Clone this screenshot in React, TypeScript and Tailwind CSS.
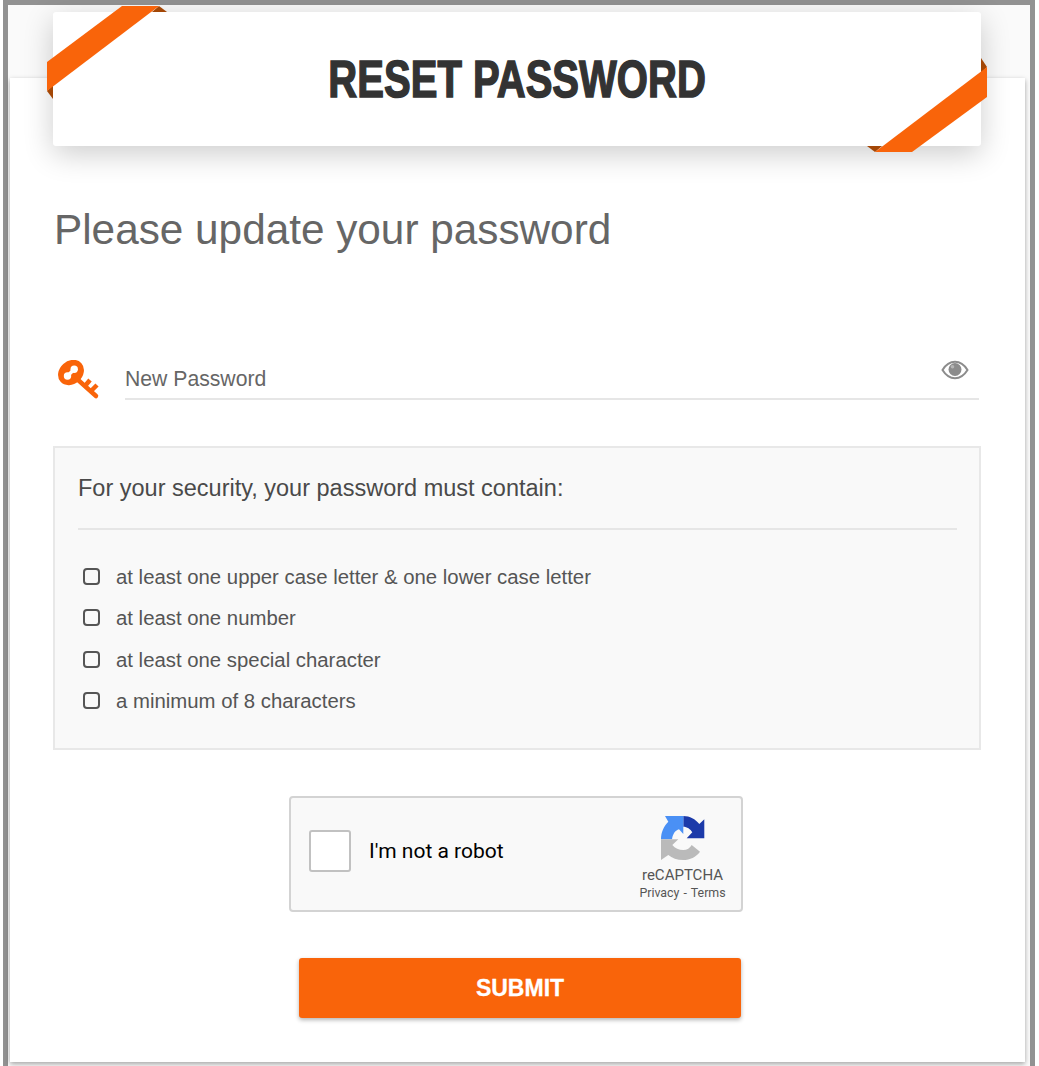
import React from "react";

const rules = [
  "at least one upper case letter & one lower case letter",
  "at least one number",
  "at least one special character",
  "a minimum of 8 characters",
];

const KeyIcon = () => (
  <svg width="44" height="42" viewBox="0 0 44 42" fill="none" className="block">
    {/* shaft + teeth */}
    <path
      stroke="#f9640a"
      strokeWidth="4.500"
      strokeLinecap="round"
      d="M19 19 38 36"
    />
    <path stroke="#f9640a" strokeWidth="4.500" d="M27 26 32 20M33 31 39 25" />
    {/* head */}
    <ellipse cx="13" cy="12.500" rx="14" ry="11.500" fill="#f9640a" transform="rotate(-42 13 12.500)" />
    <circle cx="9.500" cy="16" r="3.700" fill="#fff" />
    <circle cx="16.200" cy="9.300" r="3.700" fill="#fff" />
    <path stroke="#fff" strokeWidth="3.500" d="M9.500 16 16.200 9.300" />
  </svg>
);

const EyeIcon = () => (
  <svg width="28" height="20" viewBox="0 0 28 20" className="block">
    <path
      d="M1.500 10C5 4.300 9 1.800 14 1.800S23 4.300 26.500 10C23 15.700 19 18.200 14 18.200S5 15.700 1.500 10Z"
      fill="none"
      stroke="#8c8c8c"
      strokeWidth="2"
    />
    <circle cx="14" cy="9.500" r="6.500" fill="#8c8c8c" />
    <circle cx="11.500" cy="6.800" r="1.800" fill="#b5b5b5" />
  </svg>
);

const RecaptchaLogo = () => (
  <svg width="46" height="46" viewBox="0 0 46 46" className="block">
    <path
      fill="#1c3aa9"
      d="M23.300 0C30 0 35.300 3 39.300 8L44.300 3.300V22.300H26.700L32.300 16.300C30.500 13 27 10.700 23.300 10.700Z"
    />
    <path
      fill="#4a90f5"
      d="M1 23.300C1 16 4 10 8.300 5.700L5 0H23.300V18L19 13.300C15.500 14.500 13 17 12 23.300Z"
    />
    <path
      fill="#bababa"
      d="M1 23.300H18.300L12.300 29C15 32.500 19 34 23.300 34 27 34 30 32 31.700 29L40 35.700C36 41 30 44 23.300 44 17 44 12 42 8.300 39L1 44Z"
    />
  </svg>
);

export default function App() {
  return (
    <div className="h-[1066px] w-[1039px] overflow-hidden bg-white pl-[3px] font-['Liberation_Sans',Arial,sans-serif]">
      <div className="h-[1080px] w-[1032px] border-x-[5px] border-t-[5px] border-[#929292] bg-[#fafafa] pt-[73px] pl-[2px]">
        <div className="flex h-[984px] w-[1015px] flex-col bg-white pl-[43px] shadow-[0_2px_5px_rgba(0,0,0,0.35)]">
          {/* header card with ribbons */}
          <div className="relative -mt-[66px] flex h-[134px] w-[928px] shrink-0 items-center justify-center rounded-[3px] bg-white shadow-[0_8px_30px_rgba(0,0,0,0.2)]">
            <h1 className="scale-x-[0.77] whitespace-nowrap text-[52px] leading-none font-bold text-[#333] [-webkit-text-stroke:1.5px_#333]">
              RESET PASSWORD
            </h1>
            <svg
              width="940"
              height="146"
              viewBox="0 0 940 146"
              className="pointer-events-none absolute -top-[6px] -left-[6px]"
            >
              <path fill="#a34706" d="M105 6 112 0 120 6Z" />
              <path fill="#a34706" d="M0 85 6 79V93Z" />
              <path fill="#f9640a" d="M0 56 75 0H112L0 85Z" />
              <path fill="#a34706" d="M934 52 940 61 934 67Z" />
              <path fill="#a34706" d="M820 140H835L828 146Z" />
              <path fill="#f9640a" d="M940 61V91L865 146H828Z" />
            </svg>
          </div>

          <h2 className="mt-[60px] h-[48px] whitespace-nowrap pl-px text-[42.300px] leading-[48px] text-[#666]">
            Please update your password
          </h2>

          {/* password field */}
          <div className="mt-[106px] flex h-[40px] w-[926px] items-start">
            <div className="w-[72px] shrink-0 pl-[5px]">
              <KeyIcon />
            </div>
            <div className="flex h-[40px] flex-1 items-start justify-between border-b-2 border-[#e6e6e6]">
              <span className="pt-[7px] text-[21.200px] leading-[23px] text-[#666]">New Password</span>
              <span className="mr-[10px]">
                <EyeIcon />
              </span>
            </div>
          </div>

          {/* password rules */}
          <div className="mt-[46px] h-[304px] w-[928px] border-2 border-[#e8e8e8] bg-[#f9f9f9] px-[23px]">
            <p className="mt-[27px] h-[26px] whitespace-nowrap text-[23.500px] leading-[26px] text-[#4a4a4a]">
              For your security, your password must contain:
            </p>
            <div className="mt-[27px] h-[2px] w-[879px] bg-[#e6e6e6]" />
            <ul className="mt-[31px] flex flex-col">
              {rules.map((rule) => (
                <li key={rule} className="flex h-[41.300px] items-start gap-[16px] pl-[5px]">
                  <span className="mt-[7px] h-[17px] w-[17px] shrink-0 rounded-[4px] border-2 border-[#555]" />
                  <span className="text-[20.350px] leading-[32px] text-[#555]">{rule}</span>
                </li>
              ))}
            </ul>
          </div>

          {/* captcha */}
          <div className="mt-[46px] ml-[236px] flex h-[116px] w-[454px] items-start rounded-[4px] border-2 border-[#d3d3d3] bg-[#f9f9f9] font-['Roboto',sans-serif]">
            <span className="mt-[32px] ml-[18px] h-[42px] w-[42px] rounded-[3px] border-2 border-[#c1c1c1] bg-white" />
            <span className="mt-[41px] ml-[18px] text-[21px] leading-[25px] text-black">I'm not a robot</span>
            <div className="mt-[18px] ml-auto flex w-[100px] flex-col items-center pr-[17px]">
              <RecaptchaLogo />
              <span className="mt-[5px] text-[15px] leading-[17px] text-[#555]">reCAPTCHA</span>
              <span className="mt-[2px] whitespace-nowrap text-[12.400px] leading-[14px] text-[#555] [word-spacing:1px]">Privacy - Terms</span>
            </div>
          </div>

          <button className="mt-[46px] ml-[246px] flex h-[60px] w-[442px] items-center justify-center rounded-[3px] bg-[#f9640a] text-[23px] font-bold text-white shadow-[0_2px_4px_rgba(0,0,0,0.3)] [-webkit-text-stroke:0.3px_#fff]">
            SUBMIT
          </button>
        </div>
      </div>
    </div>
  );
}
